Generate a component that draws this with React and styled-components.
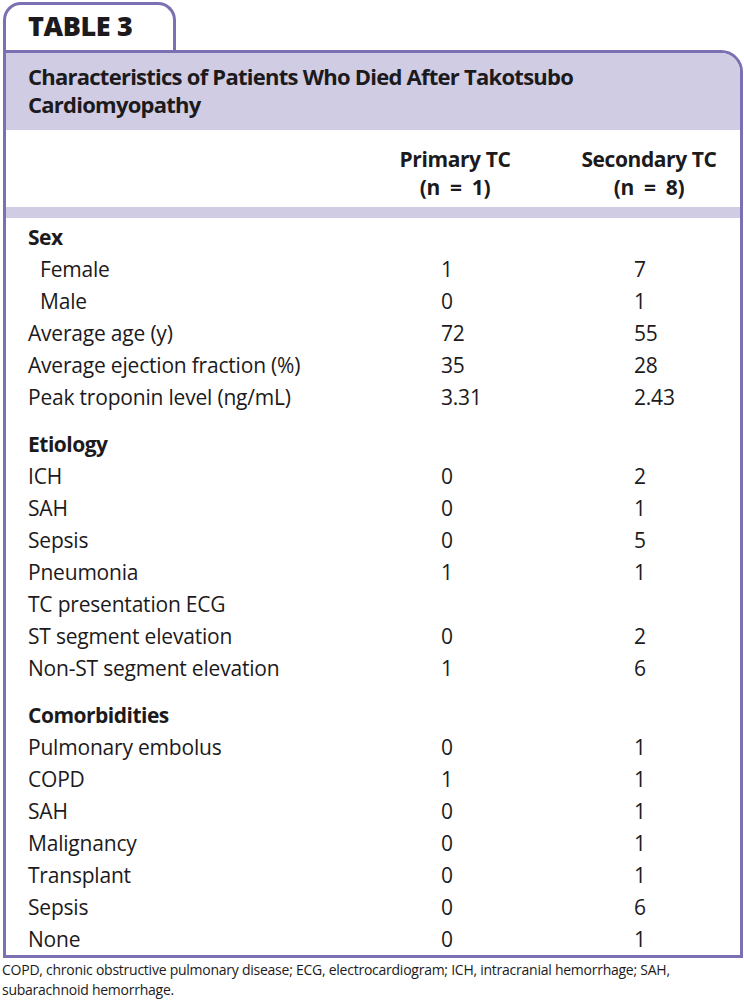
import React from "react";
import styled, { createGlobalStyle } from "styled-components";

const GlobalStyle = createGlobalStyle`
  body {
    margin: 0;
    background: #ffffff;
    font-family: "Open Sans", "Noto Sans", sans-serif;
    color: #1c1a1c;
  }
`;

const Page = styled.div`
  width: 744px;
  padding: 2px 1px 0 3px;
  box-sizing: border-box;
`;

const Tab = styled.div`
  width: 173px;
  height: 48px;
  box-sizing: border-box;
  border: 3px solid #7a70b2;
  border-bottom: none;
  border-radius: 18px 18px 0 0;
  padding: 4px 0 0 22px;
  font-size: 27px;
  font-weight: 800;
  letter-spacing: -0.4px;
  line-height: 34px;
`;

const Box = styled.div`
  border: 3px solid #7a70b2;
  border-radius: 0 22px 0 0;
  overflow: hidden;
`;

const Title = styled.div`
  background: #cfcce3;
  padding: 9px 22px 12px;
  font-size: 22px;
  font-weight: 700;
  line-height: 28px;
  letter-spacing: -0.75px;
`;

const HeadRow = styled.div`
  display: grid;
  grid-template-columns: 364px 170px 1fr;
  padding: 15px 0 6px;
  font-size: 21px;
  font-weight: 700;
  line-height: 28px;
  letter-spacing: -0.4px;
  border-bottom: 11px solid #cfcce3;
`;

const HeadCell = styled.div`
  text-align: center;
  padding-left: ${(p) => p.shift || 0}px;
`;

const Body = styled.div`
  padding: 3px 0 0;
`;

const Row = styled.div`
  display: grid;
  grid-template-columns: 435px 193px 1fr;
  height: 32px;
  align-items: center;
  font-size: 21px;
  letter-spacing: -0.2px;
  margin-top: ${(p) => (p.gap ? 15 : 0)}px;
`;

const Label = styled.div`
  padding-left: ${(p) => (p.indent ? 34 : 22)}px;
  font-weight: ${(p) => (p.bold ? 700 : 400)};
  letter-spacing: ${(p) => (p.bold ? -0.5 : -0.2)}px;
  white-space: nowrap;
`;

const Value = styled.div``;

const Note = styled.div`
  font-size: 14px;
  line-height: 20px;
  letter-spacing: -0.25px;
  padding: 2px 0 0;
  margin-left: -1px;
`;

const rows = [
  { label: "Sex", bold: true },
  { label: "Female", indent: true, a: "1", b: "7" },
  { label: "Male", indent: true, a: "0", b: "1" },
  { label: "Average age (y)", a: "72", b: "55" },
  { label: "Average ejection fraction (%)", a: "35", b: "28" },
  { label: "Peak troponin level (ng/mL)", a: "3.31", b: "2.43" },
  { label: "Etiology", bold: true, gap: true },
  { label: "ICH", a: "0", b: "2" },
  { label: "SAH", a: "0", b: "1" },
  { label: "Sepsis", a: "0", b: "5" },
  { label: "Pneumonia", a: "1", b: "1" },
  { label: "TC presentation ECG" },
  { label: "ST segment elevation", a: "0", b: "2" },
  { label: "Non-ST segment elevation", a: "1", b: "6" },
  { label: "Comorbidities", bold: true, gap: true },
  { label: "Pulmonary embolus", a: "0", b: "1" },
  { label: "COPD", a: "1", b: "1" },
  { label: "SAH", a: "0", b: "1" },
  { label: "Malignancy", a: "0", b: "1" },
  { label: "Transplant", a: "0", b: "1" },
  { label: "Sepsis", a: "0", b: "6" },
  { label: "None", a: "0", b: "1" },
];

export default function App() {
  return (
    <Page>
      <GlobalStyle />
      <Tab>TABLE 3</Tab>
      <Box>
        <Title>
          Characteristics of Patients Who Died After Takotsubo
          <br />
          Cardiomyopathy
        </Title>
        <HeadRow>
          <div />
          <HeadCell>
            Primary TC
            <br />
            (n{"\u2002"}={"\u2002"}1)
          </HeadCell>
          <HeadCell shift={18}>
            Secondary TC
            <br />
            (n{"\u2002"}={"\u2002"}8)
          </HeadCell>
        </HeadRow>
        <Body>
          {rows.map((r, i) => (
            <Row key={i} gap={r.gap}>
              <Label bold={r.bold} indent={r.indent}>
                {r.label}
              </Label>
              <Value>{r.a}</Value>
              <Value>{r.b}</Value>
            </Row>
          ))}
        </Body>
      </Box>
      <Note>
        COPD, chronic obstructive pulmonary disease; ECG, electrocardiogram; ICH, intracranial hemorrhage; SAH,
        subarachnoid hemorrhage.
      </Note>
    </Page>
  );
}
